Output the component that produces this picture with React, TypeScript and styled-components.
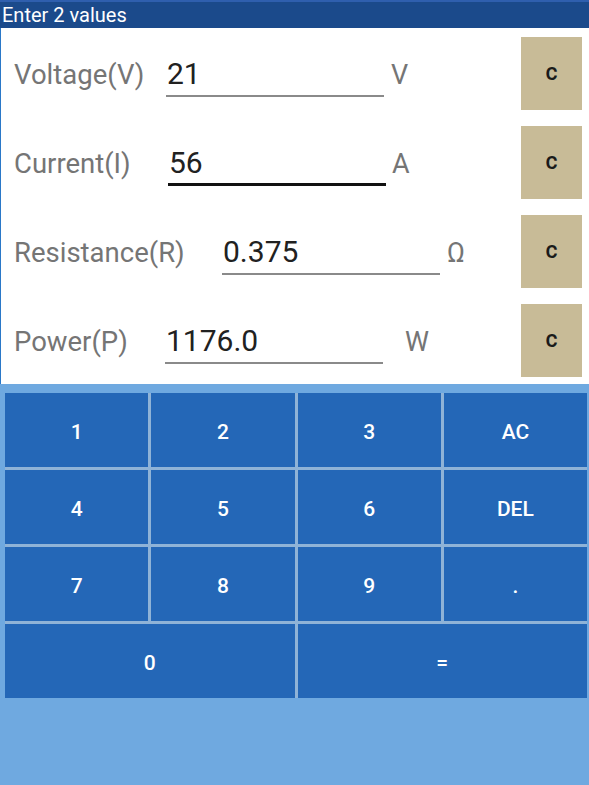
import React from "react";
import styled, { createGlobalStyle } from "styled-components";

const Global = createGlobalStyle`
  html, body { margin: 0; padding: 0; background: #6fa9e0; }
  body { font-family: Roboto, "Noto Sans", Arial, sans-serif; }
  * { box-sizing: border-box; }
`;

const Page = styled.div`
  width: 589px;
  height: 785px;
  display: flex;
  flex-direction: column;
  background: #6fa9e0;
  overflow: hidden;
`;

const Header = styled.div`
  height: 28px;
  background: #1b4a8b;
  border-top: 2px solid #2f5fae;
  color: #ffffff;
  font-size: 20px;
  line-height: 26px;
  padding-left: 2px;
`;

const Form = styled.div`
  background: #ffffff;
  border-left: 1px solid #2a78c8;
  padding: 9px 7px 7px 0;
  display: flex;
  flex-direction: column;
  gap: 16px;
`;

const Row = styled.div`
  height: 73px;
  display: flex;
  align-items: stretch;
`;

const Label = styled.div<{ $w: number }>`
  width: ${(p) => p.$w}px;
  padding-left: 13px;
  display: flex;
  align-items: center;
  padding-top: 2px;
  font-size: 27.5px;
  color: #757575;
  white-space: nowrap;
`;

const Field = styled.div`
  width: 218px;
  display: flex;
  flex-direction: column;
  justify-content: flex-end;
  padding-bottom: 13px;
`;

const Value = styled.div<{ $focused?: boolean }>`
  font-size: 30px;
  line-height: 30px;
  color: #212121;
  padding-left: 1px;
  padding-bottom: ${(p) => (p.$focused ? 5 : 6)}px;
  border-bottom: ${(p) => (p.$focused ? "3px solid #111111" : "2px solid #8a8a8a")};
`;

const Unit = styled.div<{ $ml: number }>`
  margin-left: ${(p) => p.$ml}px;
  display: flex;
  align-items: center;
  padding-top: 2px;
  font-size: 27px;
  color: #757575;
`;

const ClearButton = styled.div`
  margin-left: auto;
  width: 61px;
  background: #c8bb97;
  display: flex;
  align-items: center;
  justify-content: center;
  font-size: 23px;
  font-weight: 500;
  color: #1a1a1a;
  padding-bottom: 2px;
`;

const Keypad = styled.div`
  flex: 1;
  padding: 9px 2px 0 5px;
`;

const Grid = styled.div`
  display: grid;
  grid-template-columns: repeat(4, 1fr);
  grid-template-rows: repeat(4, 74px);
  gap: 3px;
  background: #8fb3d7;
`;

const Key = styled.div<{ $span?: number }>`
  grid-column: span ${(p) => p.$span ?? 1};
  background: #2467b7;
  color: #ffffff;
  font-size: 21px;
  font-weight: 500;
  display: flex;
  align-items: center;
  justify-content: center;
  padding-top: 3px;
`;

const rows = [
  { label: "Voltage(V)", x: 166, value: "21", unit: "V", ml: 7 },
  { label: "Current(I)", x: 168, value: "56", unit: "A", ml: 6, focused: true },
  { label: "Resistance(R)", x: 222, value: "0.375", unit: "Ω", ml: 7 },
  { label: "Power(P)", x: 165, value: "1176.0", unit: "W", ml: 22 },
];

const keys: { k: string; span?: number }[] = [
  { k: "1" }, { k: "2" }, { k: "3" }, { k: "AC" },
  { k: "4" }, { k: "5" }, { k: "6" }, { k: "DEL" },
  { k: "7" }, { k: "8" }, { k: "9" }, { k: "." },
  { k: "0", span: 2 }, { k: "=", span: 2 },
];

export default function App() {
  return (
    <Page>
      <Global />
      <Header>Enter 2 values</Header>
      <Form>
        {rows.map((r) => (
          <Row key={r.label}>
            <Label $w={r.x - 1}>{r.label}</Label>
            <Field>
              <Value $focused={r.focused}>{r.value}</Value>
            </Field>
            <Unit $ml={r.ml}>{r.unit}</Unit>
            <ClearButton>c</ClearButton>
          </Row>
        ))}
      </Form>
      <Keypad>
        <Grid>
          {keys.map((key) => (
            <Key key={key.k} $span={key.span}>
              {key.k}
            </Key>
          ))}
        </Grid>
      </Keypad>
    </Page>
  );
}
